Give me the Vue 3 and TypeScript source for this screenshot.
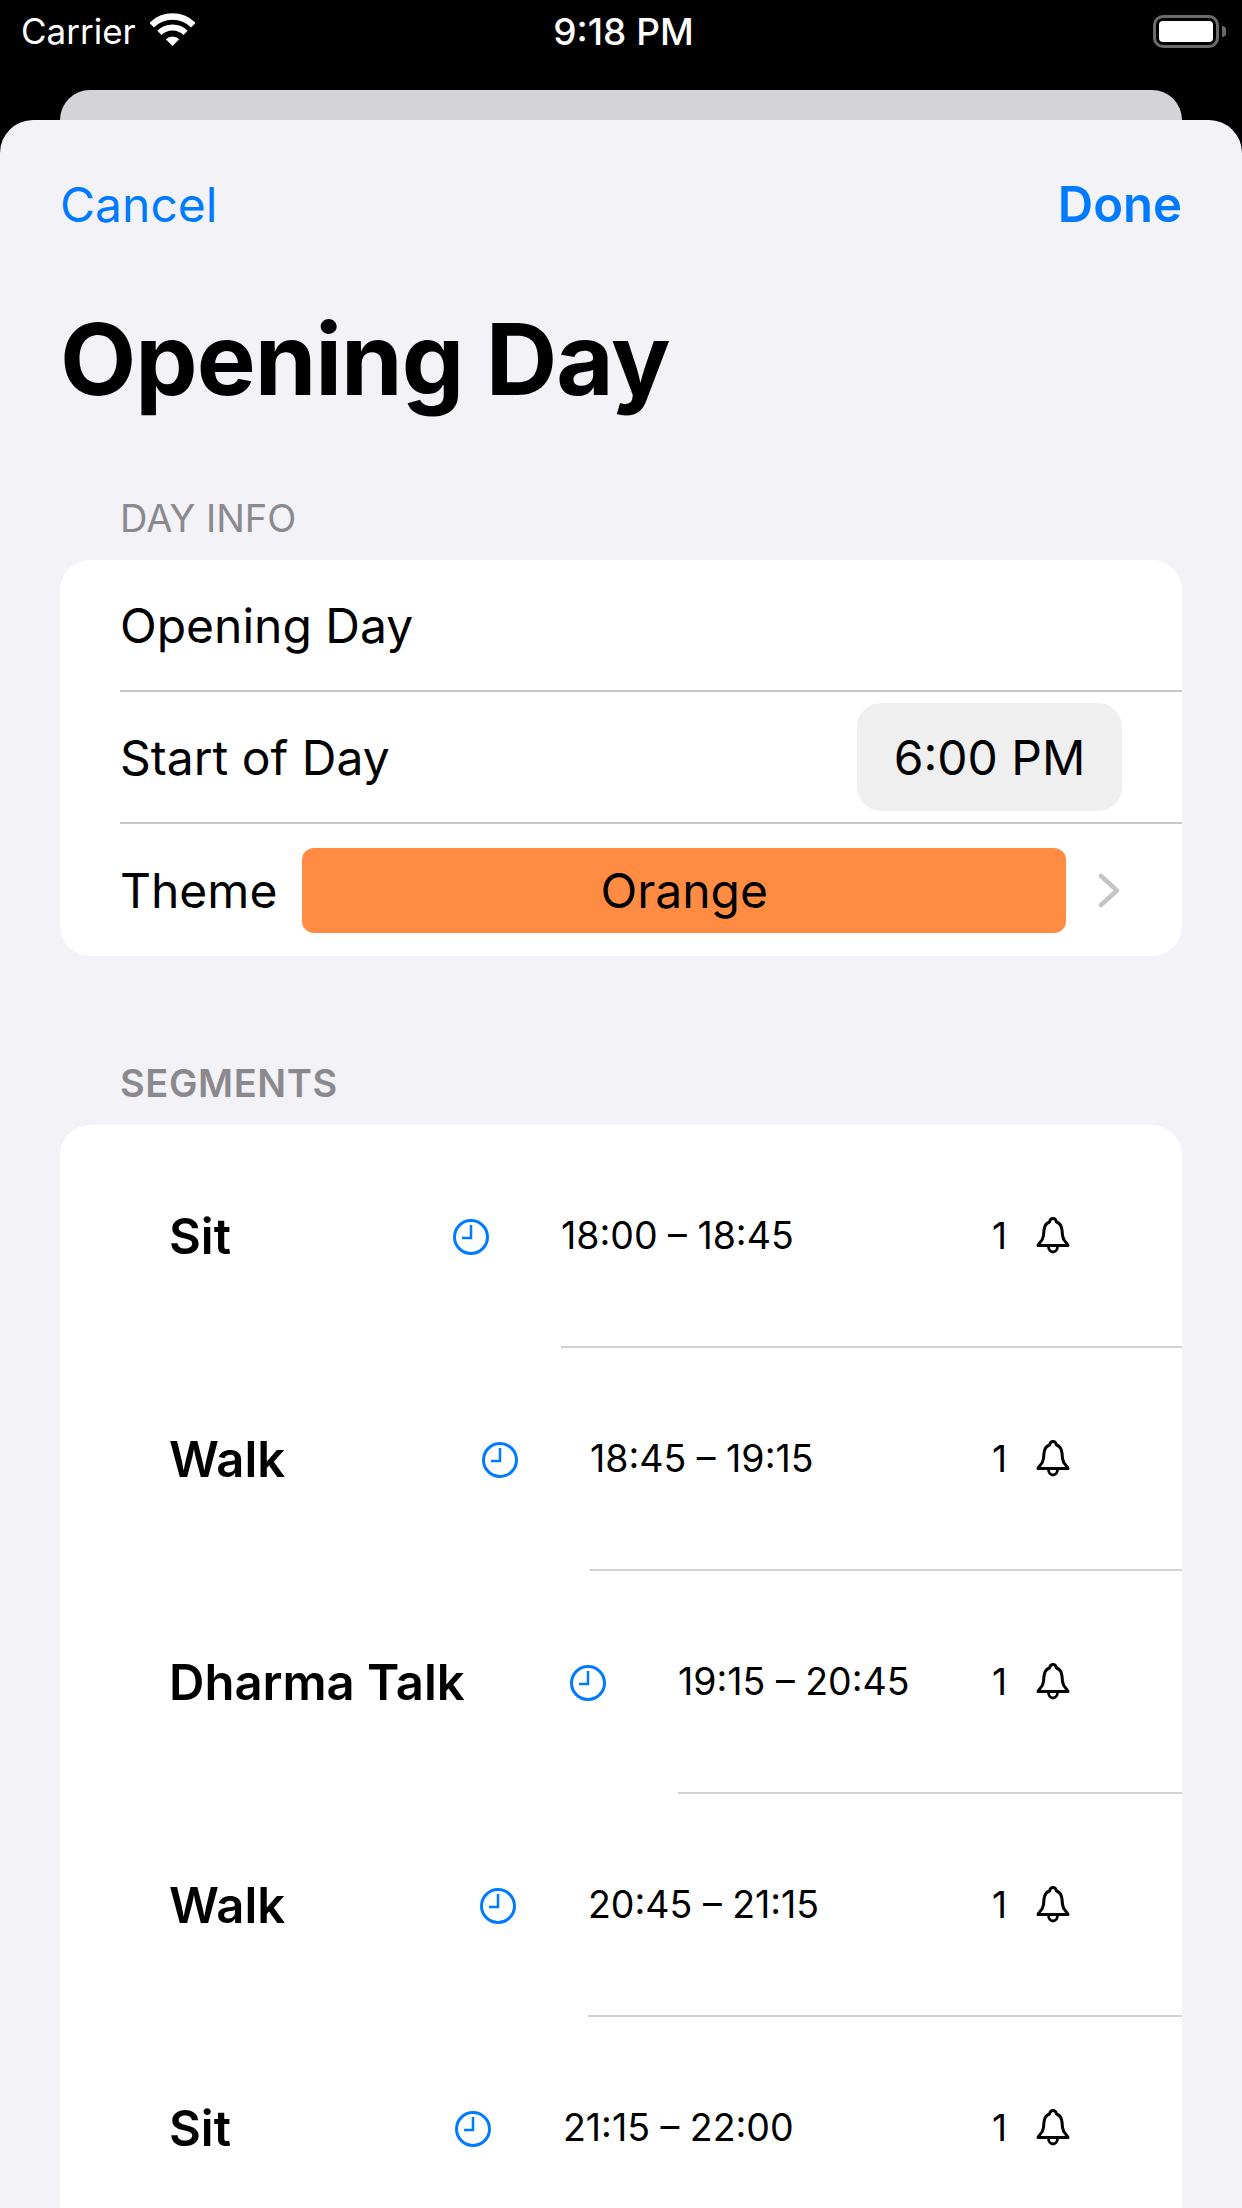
<script setup lang="ts">
interface Segment {
  title: string
  range: string
  bells: number
  titleWidth: number
}

const segments: Segment[] = [
  { title: 'Sit', range: '18:00 – 18:45', bells: 1, titleWidth: 284 },
  { title: 'Walk', range: '18:45 – 19:15', bells: 1, titleWidth: 313 },
  { title: 'Dharma Talk', range: '19:15 – 20:45', bells: 1, titleWidth: 401 },
  { title: 'Walk', range: '20:45 – 21:15', bells: 1, titleWidth: 311 },
  { title: 'Sit', range: '21:15 – 22:00', bells: 1, titleWidth: 286 },
]
</script>

<template>
  <div class="screen">
    <header class="status">
      <div class="status-left">
        <span>Carrier</span>
        <svg class="wifi" width="45" height="33" viewBox="0 0 45 33">
          <path d="M1.64 12.14A29.5 29.5 0 0 1 43.36 12.14" fill="none" stroke="#fff" stroke-width="6.5" />
          <path d="M9.42 19.92A18.5 18.5 0 0 1 35.58 19.92" fill="none" stroke="#fff" stroke-width="6" />
          <path d="M22.5 33L15.8 26.3A9.5 9.5 0 0 1 29.2 26.3Z" fill="#fff" />
        </svg>
      </div>
      <div class="clock-text">9:18 PM</div>
      <div class="status-right">
        <div class="battery"><div class="battery-fill"></div></div>
        <div class="battery-nub"></div>
      </div>
    </header>
    <div class="back-card"></div>

    <main class="sheet">
      <nav class="nav">
        <span>Cancel</span>
        <span class="done">Done</span>
      </nav>
      <h1>Opening Day</h1>

      <h2 class="section">DAY INFO</h2>
      <section class="card">
        <div class="row">Opening Day</div>
        <div class="row">
          <span>Start of Day</span>
          <span class="time-pill">6:00 PM</span>
        </div>
        <div class="row theme-row">
          <span>Theme</span>
          <span class="theme">Orange</span>
          <svg width="22" height="35" viewBox="0 0 22 35">
            <path d="M3 3L19 17.5L3 32" fill="none" stroke="#c4c4c6" stroke-width="4.5" stroke-linecap="round" stroke-linejoin="round" />
          </svg>
        </div>
      </section>

      <h2 class="section bold">SEGMENTS</h2>
      <section class="card segments">
        <div v-for="(seg, i) in segments" :key="i" class="segment">
          <span class="seg-title" :style="{ width: seg.titleWidth + 'px' }">{{ seg.title }}</span>
          <svg class="seg-clock" width="36" height="36" viewBox="0 0 36 36">
            <circle cx="18" cy="18" r="16.5" fill="none" stroke="#007aff" stroke-width="3" />
            <path d="M18 6V19H9" fill="none" stroke="#007aff" stroke-width="2.5" />
          </svg>
          <div class="seg-body">
            <span class="seg-range">{{ seg.range }}</span>
            <span class="seg-count">{{ seg.bells }}</span>
            <svg class="seg-bell" width="34" height="37" viewBox="0 0 34 37">
              <path d="M2 28.5C2 26.5 7 24.5 7.5 18.5L8 13C8.5 8.5 10.5 6 13.5 5C14 2.5 15.2 1.5 17 1.5C18.8 1.5 20 2.5 20.5 5C23.5 6 25.5 8.5 26 13L26.5 18.5C27 24.5 32 26.5 32 28.5Z" fill="none" stroke="#000" stroke-width="3" stroke-linejoin="round" />
              <path d="M12.5 29.5a4.5 5.5 0 0 0 9 0" fill="none" stroke="#000" stroke-width="2.8" />
            </svg>
          </div>
        </div>
      </section>
    </main>
  </div>
</template>

<style>
html,
body {
  margin: 0;
  background: #000;
}
</style>

<style scoped>
.screen {
  width: 1242px;
  height: 2208px;
  overflow: hidden;
  background: #000;
  font-family: Inter, "Liberation Sans", sans-serif;
  color: #000;
}

.status {
  height: 90px;
  padding: 0 16px 28px 21px;
  box-sizing: border-box;
  display: grid;
  grid-template-columns: 1fr auto 1fr;
  align-items: center;
  color: #fff;
  font-size: 35px;
}
.status-left {
  display: flex;
  align-items: center;
  gap: 14px;
}
.wifi {
  margin-top: -3px;
}
.clock-text {
  font-size: 37px;
  font-weight: 500;
}
.status-right {
  display: flex;
  align-items: center;
  justify-content: flex-end;
  gap: 3px;
}
.battery {
  width: 66px;
  height: 33px;
  box-sizing: border-box;
  border: 3px solid #6b6b6b;
  border-radius: 10px;
  padding: 3px;
}
.battery-fill {
  height: 100%;
  background: #fff;
  border-radius: 4px;
}
.battery-nub {
  width: 4px;
  height: 11px;
  background: #6b6b6b;
  border-radius: 0 4px 4px 0;
}

.back-card {
  height: 30px;
  margin: 0 60px;
  background: #d3d3d8;
  border-radius: 30px 30px 0 0;
}

.sheet {
  height: 2088px;
  padding: 0 60px;
  box-sizing: border-box;
  background: #f2f2f7;
  border-radius: 33px 33px 0 0;
}

.nav {
  display: flex;
  justify-content: space-between;
  padding-top: 55px;
  height: 120px;
  box-sizing: border-box;
  font-size: 48px;
  line-height: 60px;
  color: #007aff;
}
.done {
  font-size: 49px;
  font-weight: 600;
}

h1 {
  margin: 0;
  padding-top: 61px;
  font-size: 99px;
  line-height: 116px;
  font-weight: 700;
  letter-spacing: -1px;
}

.section {
  margin: 0;
  padding: 79px 60px 0;
  font-size: 38px;
  line-height: 44px;
  font-weight: 400;
  color: #8a8a8e;
}
.section.bold {
  padding-top: 105px;
  font-weight: 600;
  letter-spacing: 0.6px;
}

.card {
  background: #fff;
  border-radius: 30px;
  margin-top: 20px;
}

.row {
  height: 132px;
  margin-left: 60px;
  padding-right: 60px;
  display: flex;
  align-items: center;
  justify-content: space-between;
  font-size: 48px;
  border-bottom: 2px solid #c8c8ca;
  box-sizing: border-box;
}
.row:last-child {
  border-bottom: 0;
}
.time-pill {
  width: 265px;
  height: 108px;
  display: flex;
  align-items: center;
  justify-content: center;
  background: #efeff0;
  border-radius: 24px;
}
.theme-row {
  padding-right: 62px;
  gap: 25px;
}
.theme {
  flex: 1;
  height: 85px;
  display: flex;
  align-items: center;
  justify-content: center;
  background: #ff8c42;
  border-radius: 12px;
  margin-right: 7px;
}

.card.segments {
  margin-top: 20px;
}
.segment {
  height: 223px;
  padding-left: 109px;
  display: flex;
  align-items: center;
}
.seg-title {
  flex: none;
  font-size: 49px;
  font-weight: 600;
}
.seg-clock {
  flex: none;
}
.seg-body {
  flex: 1;
  align-self: stretch;
  margin-left: 72px;
  padding-right: 112px;
  display: flex;
  align-items: center;
  border-bottom: 2px solid #d2d2d4;
}
.seg-range {
  font-size: 37.5px;
  margin-right: auto;
}
.seg-count {
  font-size: 37px;
  margin-right: 29px;
}
</style>
